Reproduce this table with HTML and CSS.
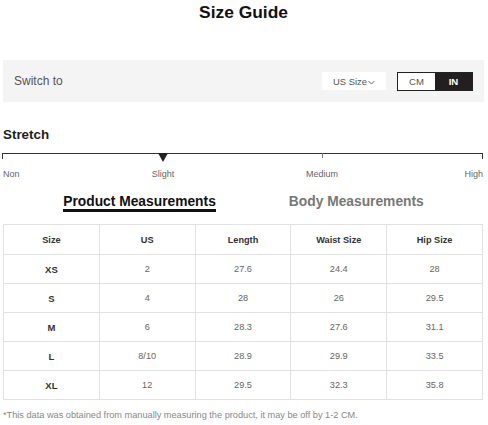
FILE: index.html
```html
<!DOCTYPE html>
<html>
<head>
<meta charset="utf-8">
<link rel="stylesheet" href="styles.css">
</head>
<body>
<div class="page">
  <h1 class="title">Size Guide</h1>

  <div class="switch-bar">
    <span class="switch-label">Switch to</span>
    <div class="switch-controls">
      <div class="dropdown">US Size<svg class="chev" width="7" height="5" viewBox="0 0 7 5"><polyline points="0.5,1 3.5,4 6.5,1" fill="none" stroke="#555" stroke-width="0.9"/></svg></div>
      <div class="unit-toggle">
        <span class="unit">CM</span>
        <span class="unit active">IN</span>
      </div>
    </div>
  </div>

  <h2 class="stretch-title">Stretch</h2>
  <div class="scale">
    <div class="scale-line">
      <span class="tick tick-start"></span>
      <span class="tick tick-mid"></span>
      <span class="tick tick-end"></span>
      <span class="marker"></span>
    </div>
    <div class="scale-labels">
      <span class="lbl lbl-non">Non</span>
      <span class="lbl lbl-slight">Slight</span>
      <span class="lbl lbl-medium">Medium</span>
      <span class="lbl lbl-high">High</span>
    </div>
  </div>

  <div class="tabs">
    <span class="tab active">Product Measurements</span>
    <span class="tab">Body Measurements</span>
  </div>

  <table class="size-table">
    <thead>
      <tr><th>Size</th><th>US</th><th>Length</th><th>Waist Size</th><th>Hip Size</th></tr>
    </thead>
    <tbody>
      <tr><td class="sz">XS</td><td>2</td><td>27.6</td><td>24.4</td><td>28</td></tr>
      <tr><td class="sz">S</td><td>4</td><td>28</td><td>26</td><td>29.5</td></tr>
      <tr><td class="sz">M</td><td>6</td><td>28.3</td><td>27.6</td><td>31.1</td></tr>
      <tr><td class="sz">L</td><td>8/10</td><td>28.9</td><td>29.9</td><td>33.5</td></tr>
      <tr><td class="sz">XL</td><td>12</td><td>29.5</td><td>32.3</td><td>35.8</td></tr>
    </tbody>
  </table>

  <p class="note">*This data was obtained from manually measuring the product, it may be off by 1-2 CM.</p>
</div>
</body>
</html>
```

FILE: styles.css
```css
* { box-sizing: border-box; }
html, body { margin: 0; padding: 0; background: #fff; }
body { font-family: "Liberation Sans", Arial, sans-serif; color: #222; }

.page { width: 481px; margin-left: 3px; }

.title {
  margin: 0;
  font-size: 17.4px;
  line-height: 24px;
  font-weight: bold;
  text-align: center;
  color: #111;
}

.switch-bar {
  margin-top: 36px;
  height: 42px;
  background: #f4f4f4;
  display: flex;
  align-items: center;
  justify-content: space-between;
  padding: 0 11px;
}
.switch-label { font-size: 12px; color: #555; }
.switch-controls { display: flex; align-items: center; gap: 11px; }
.dropdown {
  width: 64px;
  height: 18px;
  background: #fff;
  display: flex;
  align-items: center;
  justify-content: center;
  font-size: 9.4px;
  color: #555;
}
.chev { margin-left: 1px; margin-top: 2px; }
.unit-toggle {
  display: flex;
  border: 1px solid #222;
  height: 19px;
}
.unit {
  width: 37px;
  display: flex;
  align-items: center;
  justify-content: center;
  font-size: 9.6px;
  font-weight: normal;
  color: #555;
  background: #fff;
}
.unit.active { background: #231f20; color: #fff; font-weight: bold; }

.stretch-title {
  margin: 25px 0 0;
  font-size: 13.4px;
  line-height: 16px;
  font-weight: bold;
  color: #222;
}

.scale { margin-top: 10px; margin-left: -1px; width: 481px; }
.scale-line {
  position: relative;
  height: 1px;
  background: #333;
}
.tick {
  position: absolute;
  top: 0;
  width: 1px;
  height: 6px;
  background: #333;
}
.tick-start { left: 0; }
.tick-mid { left: 320px; height: 5px; background: #777; }
.tick-end { right: 0; }
.marker {
  position: absolute;
  left: 156px;
  top: 0;
  width: 0;
  height: 0;
  border-left: 5px solid transparent;
  border-right: 5px solid transparent;
  border-top: 9px solid #222;
}
.scale-labels {
  position: relative;
  height: 12px;
  margin-top: 14px;
}
.lbl {
  position: absolute;
  top: 0;
  font-size: 9px;
  line-height: 12px;
  color: #666;
  white-space: nowrap;
}
.lbl-non { left: 1px; }
.lbl-slight { left: 161px; transform: translateX(-50%); }
.lbl-medium { left: 320px; transform: translateX(-50%); }
.lbl-high { right: 0; }

.tabs {
  margin-top: 14px;
  display: flex;
  justify-content: center;
  gap: 73px;
}
.tab {
  font-size: 13.8px;
  line-height: 15px;
  font-weight: bold;
  color: #777;
  border-bottom: 3px solid transparent;
}
.tab.active { color: #111; border-bottom-color: #111; }

.size-table {
  margin-top: 12px;
  width: 480px;
  border-collapse: collapse;
  table-layout: fixed;
}
.size-table th, .size-table td {
  border: 1px solid #e2e2e2;
  text-align: center;
  font-size: 9.2px;
  padding: 0;
}
.size-table th { height: 30px; font-weight: bold; color: #333; }
.size-table td { height: 29px; color: #666; }
.size-table td.sz { font-weight: bold; color: #333; font-size: 9.5px; }

.note {
  margin: 9px 0 0;
  font-size: 9.2px;
  line-height: 12px;
  color: #888;
}
```
